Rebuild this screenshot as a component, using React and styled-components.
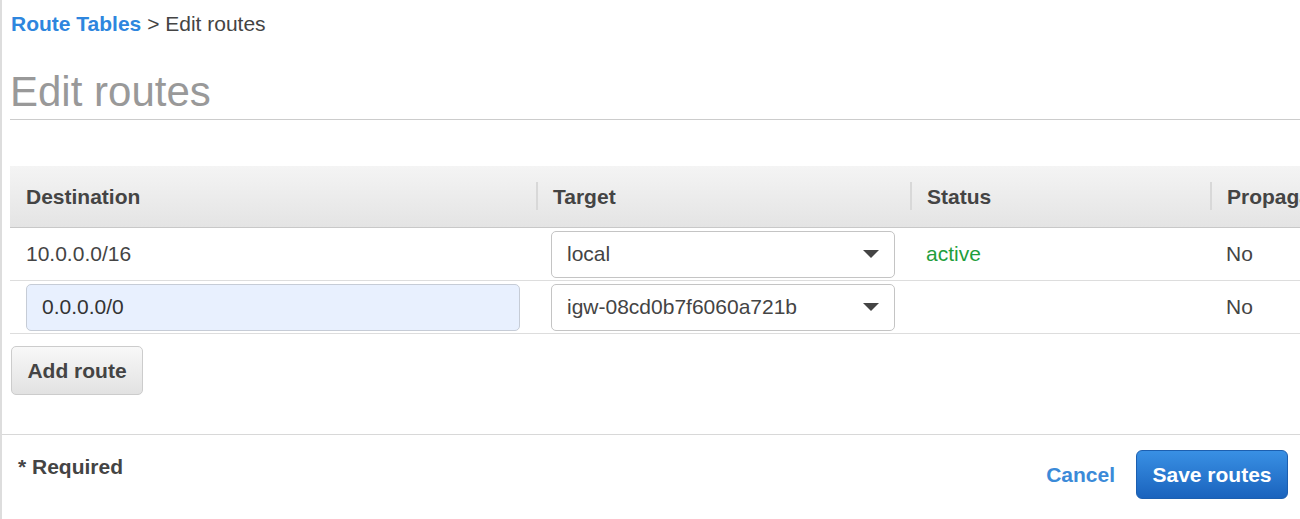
import React from "react"
import styled, { createGlobalStyle } from "styled-components"

const GlobalStyle = createGlobalStyle`
    html, body {
        margin: 0;
        padding: 0;
        background: #ffffff;
        overflow: hidden;
    }
    body {
        font-family: "Liberation Sans", Arial, sans-serif;
        color: #444444;
    }
`

const Page = styled.div`
    width: 1300px;
    height: 519px;
    box-sizing: border-box;
    border-left: 2px solid #dddddd;
    display: flex;
    flex-direction: column;
    overflow: hidden;
`

const Content = styled.div`
    padding: 10px 0 0 8px;
    height: 434px;
    box-sizing: border-box;
`

const Breadcrumb = styled.div`
    font-size: 21px;
    line-height: 28px;
    padding-left: 1px;
    color: #444444;
`

const CrumbLink = styled.a`
    color: #2e86de;
    font-weight: bold;
    text-decoration: none;
`

const Title = styled.h1`
    margin: 29px 0 0;
    font-size: 42px;
    font-weight: normal;
    line-height: 50px;
    color: #999999;
    padding-bottom: 2px;
    border-bottom: 1px solid #cccccc;
`

const Table = styled.div`
    margin-top: 46px;
    width: 1500px;
`

const Row = styled.div`
    display: grid;
    grid-template-columns: 526px 374px 300px 300px;
    height: ${(p) => (p.$head ? "61px" : "52px")};
    border-bottom: 1px solid ${(p) => (p.$head ? "#c8c8c8" : "#dddddd")};
    background: ${(p) => (p.$head ? "linear-gradient(#f4f4f4, #e4e4e4)" : "#ffffff")};
`

const HeadCell = styled.div`
    display: flex;
    align-items: center;
    padding-left: 16px;
    font-size: 21px;
    font-weight: bold;
    color: #444444;
    position: relative;
    white-space: nowrap;

    & + &::before {
        content: "";
        position: absolute;
        left: 0;
        top: 16px;
        bottom: 17px;
        width: 2px;
        background: #d8d8d8;
    }
    & + & {
        padding-left: 17px;
    }
`

const Cell = styled.div`
    display: flex;
    align-items: center;
    padding: 0 ${(p) => (p.$pad ? "15px" : "0")} 0 ${(p) => (p.$pad ? "15px" : "16px")};
    font-size: 21px;
    color: ${(p) => p.$color || "#444444"};
`

const TextInput = styled.input`
    width: 494px;
    height: 47px;
    box-sizing: border-box;
    border: 1px solid #c6ccd6;
    border-radius: 5px;
    background: #e8f0fe;
    font-family: "Liberation Sans", Arial, sans-serif;
    font-size: 21px;
    color: #333333;
    padding: 0 15px;
    outline: none;
`

const Select = styled.div`
    width: 344px;
    height: 47px;
    box-sizing: border-box;
    border: 1px solid #c4c4c4;
    border-radius: 5px;
    display: flex;
    align-items: center;
    justify-content: space-between;
    padding: 0 15px 0 15px;
    font-size: 21px;
    color: #444444;
    background: #ffffff;
`

const Caret = styled.span`
    width: 0;
    height: 0;
    border-left: 8px solid transparent;
    border-right: 8px solid transparent;
    border-top: 8px solid #444444;
`

const GrayButton = styled.button`
    margin-top: 12px;
    margin-left: 1px;
    width: 132px;
    height: 49px;
    border: 1px solid #cccccc;
    border-radius: 5px;
    background: linear-gradient(#f8f8f8, #e2e2e2);
    font-family: "Liberation Sans", Arial, sans-serif;
    font-size: 21px;
    font-weight: bold;
    color: #444444;
    padding: 0;
`

const Footer = styled.div`
    border-top: 1px solid #d8d8d8;
    display: flex;
    justify-content: space-between;
    align-items: flex-start;
    padding: 0 12px 0 16px;
    flex: 1;
`

const Required = styled.div`
    margin-top: 20px;
    font-size: 21px;
    font-weight: bold;
    color: #444444;
`

const Actions = styled.div`
    display: flex;
    align-items: center;
    gap: 21px;
    margin-top: 15px;
`

const LinkButton = styled.a`
    font-size: 21px;
    font-weight: bold;
    color: #3b8ad8;
    text-decoration: none;
`

const PrimaryButton = styled.button`
    width: 152px;
    height: 49px;
    border: 1px solid #1c5fb0;
    border-radius: 6px;
    background: linear-gradient(#3990e4, #1a63bd);
    font-family: "Liberation Sans", Arial, sans-serif;
    font-size: 21px;
    font-weight: bold;
    color: #ffffff;
    padding: 0;
`

const routes = [
    { dest: "10.0.0.0/16", target: "local", status: "active", prop: "No", editable: false },
    { dest: "0.0.0.0/0", target: "igw-08cd0b7f6060a721b", status: "", prop: "No", editable: true },
]

const App = () => {
    return (
        <>
            <GlobalStyle />
            <Page>
                <Content>
                    <Breadcrumb>
                        <CrumbLink href="#">Route Tables</CrumbLink> &gt; Edit routes
                    </Breadcrumb>
                    <Title>Edit routes</Title>

                    <Table>
                        <Row $head>
                            <HeadCell>Destination</HeadCell>
                            <HeadCell>Target</HeadCell>
                            <HeadCell>Status</HeadCell>
                            <HeadCell>Propagated</HeadCell>
                        </Row>
                        {routes.map((r) => (
                            <Row key={r.dest}>
                                <Cell>
                                    {r.editable ? <TextInput defaultValue={r.dest} /> : r.dest}
                                </Cell>
                                <Cell $pad>
                                    <Select>
                                        {r.target}
                                        <Caret />
                                    </Select>
                                </Cell>
                                <Cell $color="#1f9e3c">{r.status}</Cell>
                                <Cell>{r.prop}</Cell>
                            </Row>
                        ))}
                    </Table>

                    <GrayButton>Add route</GrayButton>
                </Content>

                <Footer>
                    <Required>* Required</Required>
                    <Actions>
                        <LinkButton href="#">Cancel</LinkButton>
                        <PrimaryButton>Save routes</PrimaryButton>
                    </Actions>
                </Footer>
            </Page>
        </>
    )
}

export default App
